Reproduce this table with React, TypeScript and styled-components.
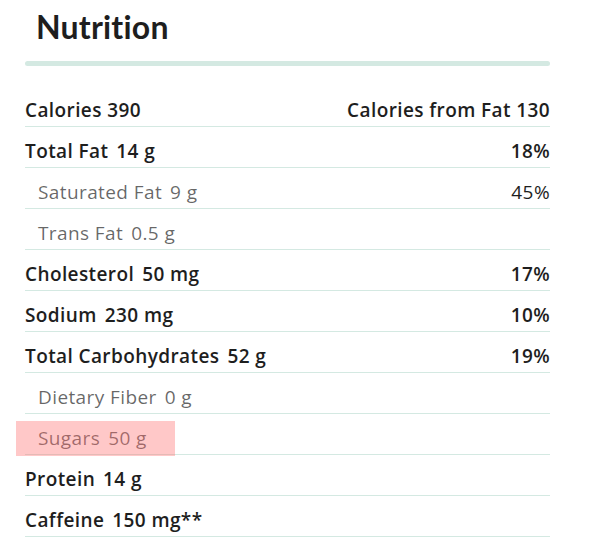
import React from "react";
import styled, { createGlobalStyle } from "styled-components";

const Global = createGlobalStyle`
  html, body { margin: 0; padding: 0; background: #fff; }
  body { font-family: "Open Sans", "Noto Sans", sans-serif; color: rgba(0,0,0,0.87); }
`;

const Panel = styled.section`
  width: 525px;
  padding: 7px 0 0 25px;
`;

const Heading = styled.h2`
  margin: 0;
  padding-left: 11px;
  font-family: Lato, "Open Sans", sans-serif;
  font-size: 32px;
  line-height: 40px;
  font-weight: 700;
  letter-spacing: 0.2px;
  color: #1e1e1e;
`;

const Bar = styled.div`
  height: 5px;
  margin-top: 14px;
  border-radius: 3px;
  background: #d4e9e2;
`;

const List = styled.div`
  margin-top: 20px;
`;

const Row = styled.div<{ $sub?: boolean }>`
  position: relative;
  display: flex;
  justify-content: space-between;
  align-items: baseline;
  padding: 10px 0 2px ${(p) => (p.$sub ? "13px" : "0")};
  line-height: 28px;
  font-size: 19px;
  letter-spacing: 0.4px;
  font-weight: ${(p) => (p.$sub ? 400 : 600)};
  color: ${(p) => (p.$sub ? "rgba(0,0,0,0.6)" : "#1e1e1e")};
  border-bottom: 1px solid #d4e9e2;
`;

const Value = styled.span`
  margin-left: 8px;
`;

const Daily = styled.span`
  color: #1e1e1e;
`;

const Highlight = styled.div`
  position: absolute;
  left: -9px;
  top: 7px;
  width: 159px;
  height: 35px;
  background: rgba(255, 110, 110, 0.38);
  pointer-events: none;
`;

type Item = {
  label: string;
  value?: string;
  dv?: string;
  sub?: boolean;
  highlight?: boolean;
};

const items: Item[] = [
  { label: "Total Fat", value: "14 g", dv: "18%" },
  { label: "Saturated Fat", value: "9 g", dv: "45%", sub: true },
  { label: "Trans Fat", value: "0.5 g", sub: true },
  { label: "Cholesterol", value: "50 mg", dv: "17%" },
  { label: "Sodium", value: "230 mg", dv: "10%" },
  { label: "Total Carbohydrates", value: "52 g", dv: "19%" },
  { label: "Dietary Fiber", value: "0 g", sub: true },
  { label: "Sugars", value: "50 g", sub: true, highlight: true },
  { label: "Protein", value: "14 g" },
  { label: "Caffeine", value: "150 mg**" },
];

export default function App() {
  return (
    <>
      <Global />
      <Panel>
        <Heading>Nutrition</Heading>
        <Bar />
        <List>
          <Row>
            <span>Calories 390</span>
            <span>Calories from Fat 130</span>
          </Row>
          {items.map((it) => (
            <Row key={it.label} $sub={it.sub}>
              <span>
                {it.label}
                <Value>{it.value}</Value>
              </span>
              {it.dv && <Daily>{it.dv}</Daily>}
              {it.highlight && <Highlight />}
            </Row>
          ))}
        </List>
      </Panel>
    </>
  );
}
